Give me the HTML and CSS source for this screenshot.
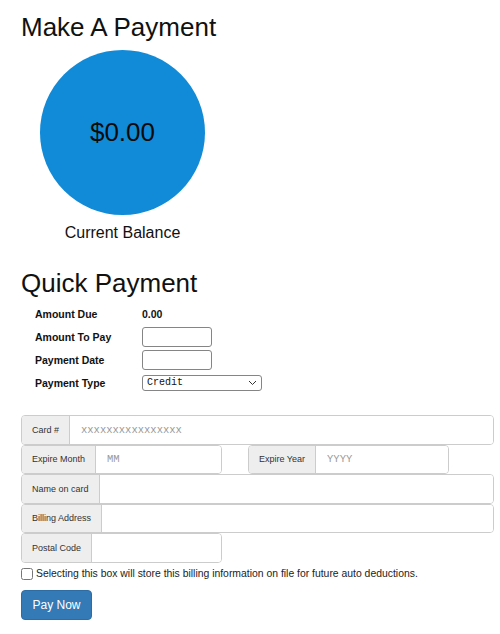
FILE: index.html
```html
<!DOCTYPE html>
<html lang="en">
<head>
    <meta charset="UTF-8">
    <meta name="viewport" content="width=device-width, initial-scale=1.0">
    <title>Make A Payment</title>
    <link rel="stylesheet" href="styles.css">
</head>
<body>
    <div class="container">
        <h1 class="page-title">Make A Payment</h1>

        <div class="balance">
            <div class="balance-circle">$0.00</div>
            <div class="balance-label">Current Balance</div>
        </div>

        <h2 class="section-title">Quick Payment</h2>

        <div class="quick-grid">
            <div class="quick-label">Amount Due</div>
            <div class="quick-value">0.00</div>

            <div class="quick-label">Amount To Pay</div>
            <div class="quick-value"><input type="text" class="small-input"></div>

            <div class="quick-label">Payment Date</div>
            <div class="quick-value"><input type="text" class="small-input"></div>

            <div class="quick-label">Payment Type</div>
            <div class="quick-value">
                <select class="type-select">
                    <option>Credit</option>
                    <option>Check</option>
                </select>
            </div>
        </div>

        <form class="card-form">
            <div class="input-group wide">
                <span class="addon">Card #</span>
                <input type="text" class="field" placeholder="xxxxxxxxxxxxxxxx">
            </div>

            <div class="group-row">
                <div class="input-group half">
                    <span class="addon">Expire Month</span>
                    <input type="text" class="field" placeholder="MM">
                </div>
                <div class="input-group half">
                    <span class="addon">Expire Year</span>
                    <input type="text" class="field" placeholder="YYYY">
                </div>
            </div>

            <div class="input-group wide">
                <span class="addon">Name on card</span>
                <input type="text" class="field">
            </div>

            <div class="input-group wide">
                <span class="addon">Billing Address</span>
                <input type="text" class="field">
            </div>

            <div class="input-group half">
                <span class="addon">Postal Code</span>
                <input type="text" class="field">
            </div>

            <label class="store-check">
                <input type="checkbox">
                <span>Selecting this box will store this billing information on file for future auto deductions.</span>
            </label>

            <button type="button" class="pay-button">Pay Now</button>
        </form>
    </div>
</body>
</html>
```

FILE: styles.css
```css
* {
    margin: 0;
    padding: 0;
    box-sizing: border-box;
}

body {
    background: #fff;
    color: #111;
    font-family: "Liberation Sans", Arial, sans-serif;
}

.container {
    padding: 12px 7px 0 21px;
}

.page-title,
.section-title {
    font-size: 26px;
    font-weight: 400;
    line-height: 30px;
}

.balance {
    width: 165px;
    margin: 8px 0 0 19px;
}

.balance-circle {
    width: 165px;
    height: 165px;
    border-radius: 50%;
    background: #118ad7;
    display: flex;
    align-items: center;
    justify-content: center;
    font-size: 26px;
    color: #0a0a0a;
}

.balance-label {
    margin-top: 8px;
    font-size: 16px;
    line-height: 20px;
    text-align: center;
}

.section-title {
    margin-top: 25px;
}

.quick-grid {
    display: grid;
    grid-template-columns: 107px auto;
    grid-auto-rows: 23px;
    align-items: center;
    margin: 4px 0 0 14px;
    font-size: 10.5px;
    font-weight: 700;
}

.small-input {
    display: block;
    width: 70px;
    height: 20px;
    border: 1px solid #858585;
    border-radius: 3px;
}

.type-select {
    display: block;
    width: 120px;
    height: 16px;
    padding: 0 4px;
    font-family: "Liberation Mono", "Courier New", monospace;
    font-size: 10px;
    color: #111;
    border: 1px solid #858585;
    border-radius: 3px;
    appearance: none;
    -webkit-appearance: none;
    background: #fff url("data:image/svg+xml,%3Csvg xmlns='http://www.w3.org/2000/svg' width='9' height='6' viewBox='0 0 9 6'%3E%3Cpath d='M1 1l3.5 3.5L8 1' fill='none' stroke='%23333' stroke-width='1'/%3E%3C/svg%3E") no-repeat right 4px center;
}

.card-form {
    margin-top: 21px;
}

.input-group {
    display: flex;
    height: 29.5px;
    border: 1px solid #ccc;
    border-radius: 4px;
    overflow: hidden;
    background: #fff;
}

.input-group.wide {
    width: 473px;
}

.input-group.half {
    width: 201px;
}

.group-row {
    display: flex;
    gap: 26px;
}

.addon {
    display: flex;
    align-items: center;
    padding: 0 10px;
    background: #eee;
    border-right: 1px solid #ccc;
    font-size: 9px;
    color: #333;
    white-space: nowrap;
}

.field {
    flex: 1;
    min-width: 0;
    border: none;
    outline: none;
    padding: 0 11px;
    font-family: "Liberation Mono", "Courier New", monospace;
    font-size: 10.5px;
    color: #333;
}

.field::placeholder {
    color: #999;
}

.store-check {
    display: flex;
    align-items: center;
    gap: 3px;
    margin-top: 5px;
    font-size: 10.4px;
    color: #222;
}

.store-check input {
    width: 12px;
    height: 12px;
    margin: 0;
}

.pay-button {
    display: block;
    margin-top: 10px;
    width: 71px;
    height: 30px;
    border: 1px solid #2e6da4;
    border-radius: 4px;
    background: #337ab7;
    color: #fff;
    font-family: "Liberation Sans", Arial, sans-serif;
    font-size: 12px;
}
```
